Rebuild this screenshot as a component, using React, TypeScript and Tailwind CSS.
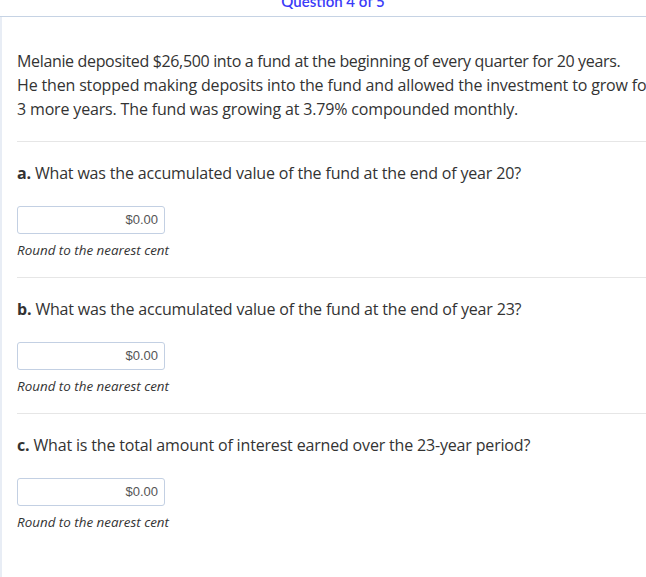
import React from "react";

const body = { fontFamily: '"Open Sans", "Noto Sans", sans-serif' };

function Part({ letter, text }: { letter: string; text: string }) {
  return (
    <div className="border-t border-[#e6e6e6] pt-[19px] pb-[18px]">
      <p className="text-[16px] leading-[24px] text-[#333] tracking-[-0.17px]" style={body}>
        <b className="font-bold">{letter}.</b> {text}
      </p>
      <div className="mt-[21px] w-[148px] h-[28px] border border-[#c3d0e3] rounded-[3px] flex items-center justify-end pr-[6px]">
        <span className="text-[13px] text-[#555]" style={{ fontFamily: '"Liberation Sans", Arial, sans-serif' }}>$0.00</span>
      </div>
      <p className="mt-[7px] text-[13.4px] leading-[18px] italic text-[#333]" style={body}>
        Round to the nearest cent
      </p>
    </div>
  );
}

export default function App() {
  return (
    <div className="w-[646px] h-[577px] overflow-hidden bg-white relative">
      <div className="h-[17px] border-b border-[#c6d3e4] relative overflow-hidden">
        <div
          className="absolute left-[20px] right-0 top-[-9px] text-center text-[15px] leading-[20px] font-semibold text-[#3b3bf8]"
          style={{ fontFamily: 'Lato, "Open Sans", sans-serif' }}
        >
          Question 4 of 5
        </div>
      </div>
      <div className="border-l-2 border-[#e8edf5] h-[560px]">
        <div className="pl-[15px] pt-[32px] w-[700px]">
          <div className="text-[16px] leading-[24px] text-[#333] pb-[20px] whitespace-nowrap" style={body}>
            <div className="tracking-[-0.34px]">Melanie deposited $26,500 into a fund at the beginning of every quarter for 20 years.</div>
            <div className="tracking-[-0.16px]">He then stopped making deposits into the fund and allowed the investment to grow for</div>
            <div className="tracking-[-0.16px]">3 more years. The fund was growing at 3.79% compounded monthly.</div>
          </div>
          <Part letter="a" text="What was the accumulated value of the fund at the end of year 20?" />
          <Part letter="b" text="What was the accumulated value of the fund at the end of year 23?" />
          <Part letter="c" text="What is the total amount of interest earned over the 23-year period?" />
        </div>
      </div>
    </div>
  );
}
